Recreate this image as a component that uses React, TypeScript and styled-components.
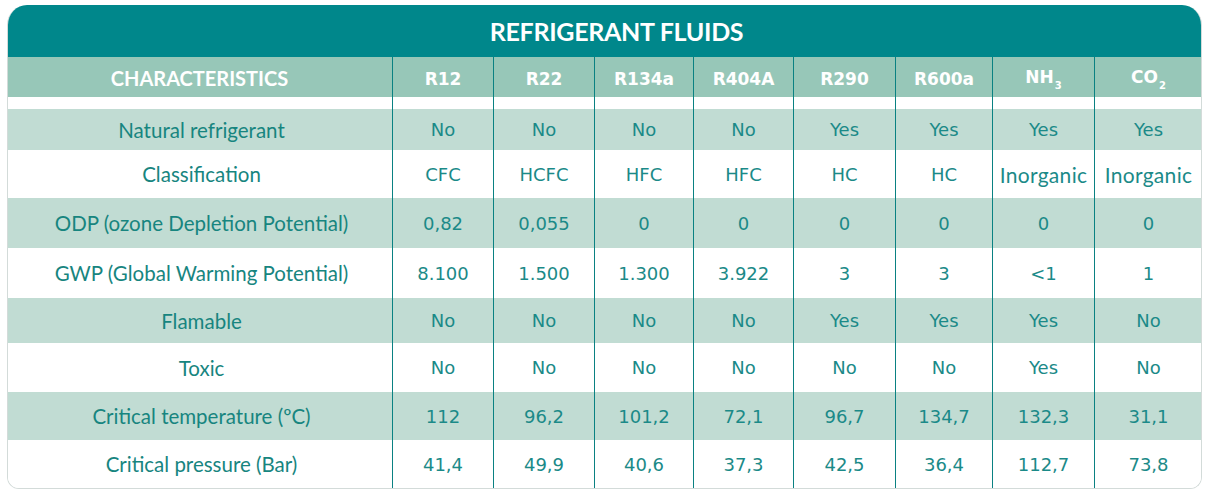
import React from "react";
import styled, { createGlobalStyle } from "styled-components";

const GlobalStyle = createGlobalStyle`
  body {
    margin: 0;
    background: #ffffff;
    font-family: "Lato", "Open Sans", sans-serif;
  }
`;

const COLS = "385px 101px 101px 99px 100px 102px 97px 102px 108px";

const Wrapper = styled.div`
  width: 1195px;
  margin: 5px 0 0 7px;
  box-sizing: border-box;
  border: 1px solid #d3dbd9;
  border-top: none;
  border-radius: 20px 20px 12px 12px;
  overflow: hidden;
`;

const Title = styled.div`
  height: 52px;
  background: #00878b;
  color: #ffffff;
  font-family: "Lato", sans-serif;
  font-weight: 700;
  font-size: 25px;
  letter-spacing: -0.3px;
  display: flex;
  align-items: center;
  justify-content: center;
  padding-left: 24px;
`;

const Row = styled.div<{ $h: number; $bg: string }>`
  display: grid;
  grid-template-columns: ${COLS};
  height: ${(p) => p.$h}px;
  background: ${(p) => p.$bg};
  margin-right: -1px;
  margin-left: -1px;
`;

const Cell = styled.div<{ $first?: boolean }>`
  display: flex;
  align-items: center;
  justify-content: center;
  border-left: ${(p) => (p.$first ? "none" : "1px solid #0a8182")};
  box-sizing: border-box;
`;

const HeadLabel = styled.span`
  color: #ffffff;
  font-family: "Lato", sans-serif;
  font-weight: 700;
  font-size: 20px;
  padding-top: 2px;
`;

const HeadValue = styled.span`
  color: #ffffff;
  font-family: "DejaVu Sans", sans-serif;
  font-weight: 700;
  font-size: 17px;
  padding-top: 3px;

  sub {
    font-size: 10px;
    vertical-align: -6px;
    margin-left: 1px;
  }
`;

const Label = styled.span`
  color: #17857f;
  font-family: "Lato", sans-serif;
  font-size: 20.5px;
  padding-left: 4px;
`;

const Value = styled.span`
  color: #1b8a88;
  font-family: "DejaVu Sans", sans-serif;
  font-size: 18px;
  font-weight: 400;
`;

const TextValue = styled.span`
  color: #1b8a88;
  font-family: "Lato", sans-serif;
  font-size: 21px;
  letter-spacing: 0.3px;
`;

const SHADE = "#c1dcd3";
const HEAD = "#97c7b8";

const refrigerants: React.ReactNode[] = [
  "R12",
  "R22",
  "R134a",
  "R404A",
  "R290",
  "R600a",
  <>
    NH<sub>3</sub>
  </>,
  <>
    CO<sub>2</sub>
  </>,
];

type RowData = {
  label: string;
  values: string[];
  h: number;
};

const rows: RowData[] = [
  {
    label: "Natural refrigerant",
    values: ["No", "No", "No", "No", "Yes", "Yes", "Yes", "Yes"],
    h: 41,
  },
  {
    label: "Classification",
    values: ["CFC", "HCFC", "HFC", "HFC", "HC", "HC", "Inorganic", "Inorganic"],
    h: 48,
  },
  {
    label: "ODP (ozone Depletion Potential)",
    values: ["0,82", "0,055", "0", "0", "0", "0", "0", "0"],
    h: 50,
  },
  {
    label: "GWP (Global Warming Potential)",
    values: ["8.100", "1.500", "1.300", "3.922", "3", "3", "<1", "1"],
    h: 50,
  },
  {
    label: "Flamable",
    values: ["No", "No", "No", "No", "Yes", "Yes", "Yes", "No"],
    h: 45,
  },
  {
    label: "Toxic",
    values: ["No", "No", "No", "No", "No", "No", "Yes", "No"],
    h: 49,
  },
  {
    label: "Critical temperature (ºC)",
    values: ["112", "96,2", "101,2", "72,1", "96,7", "134,7", "132,3", "31,1"],
    h: 48,
  },
  {
    label: "Critical pressure (Bar)",
    values: ["41,4", "49,9", "40,6", "37,3", "42,5", "36,4", "112,7", "73,8"],
    h: 48,
  },
];

const renderValue = (v: string) =>
  v === "Inorganic" ? <TextValue>{v}</TextValue> : <Value>{v}</Value>;

const App = () => {
  return (
    <>
      <GlobalStyle />
      <Wrapper>
        <Title>REFRIGERANT FLUIDS</Title>
        <Row $h={40} $bg={HEAD}>
          <Cell $first>
            <HeadLabel>CHARACTERISTICS</HeadLabel>
          </Cell>
          {refrigerants.map((r, i) => (
            <Cell key={i}>
              <HeadValue>{r}</HeadValue>
            </Cell>
          ))}
        </Row>
        <Row $h={12} $bg="#ffffff">
          <Cell $first />
          {refrigerants.map((_, i) => (
            <Cell key={i} />
          ))}
        </Row>
        {rows.map((row, idx) => (
          <Row key={row.label} $h={row.h} $bg={idx % 2 === 0 ? SHADE : "#ffffff"}>
            <Cell $first>
              <Label>{row.label}</Label>
            </Cell>
            {row.values.map((v, i) => (
              <Cell key={i}>{renderValue(v)}</Cell>
            ))}
          </Row>
        ))}
      </Wrapper>
    </>
  );
};

export default App;
